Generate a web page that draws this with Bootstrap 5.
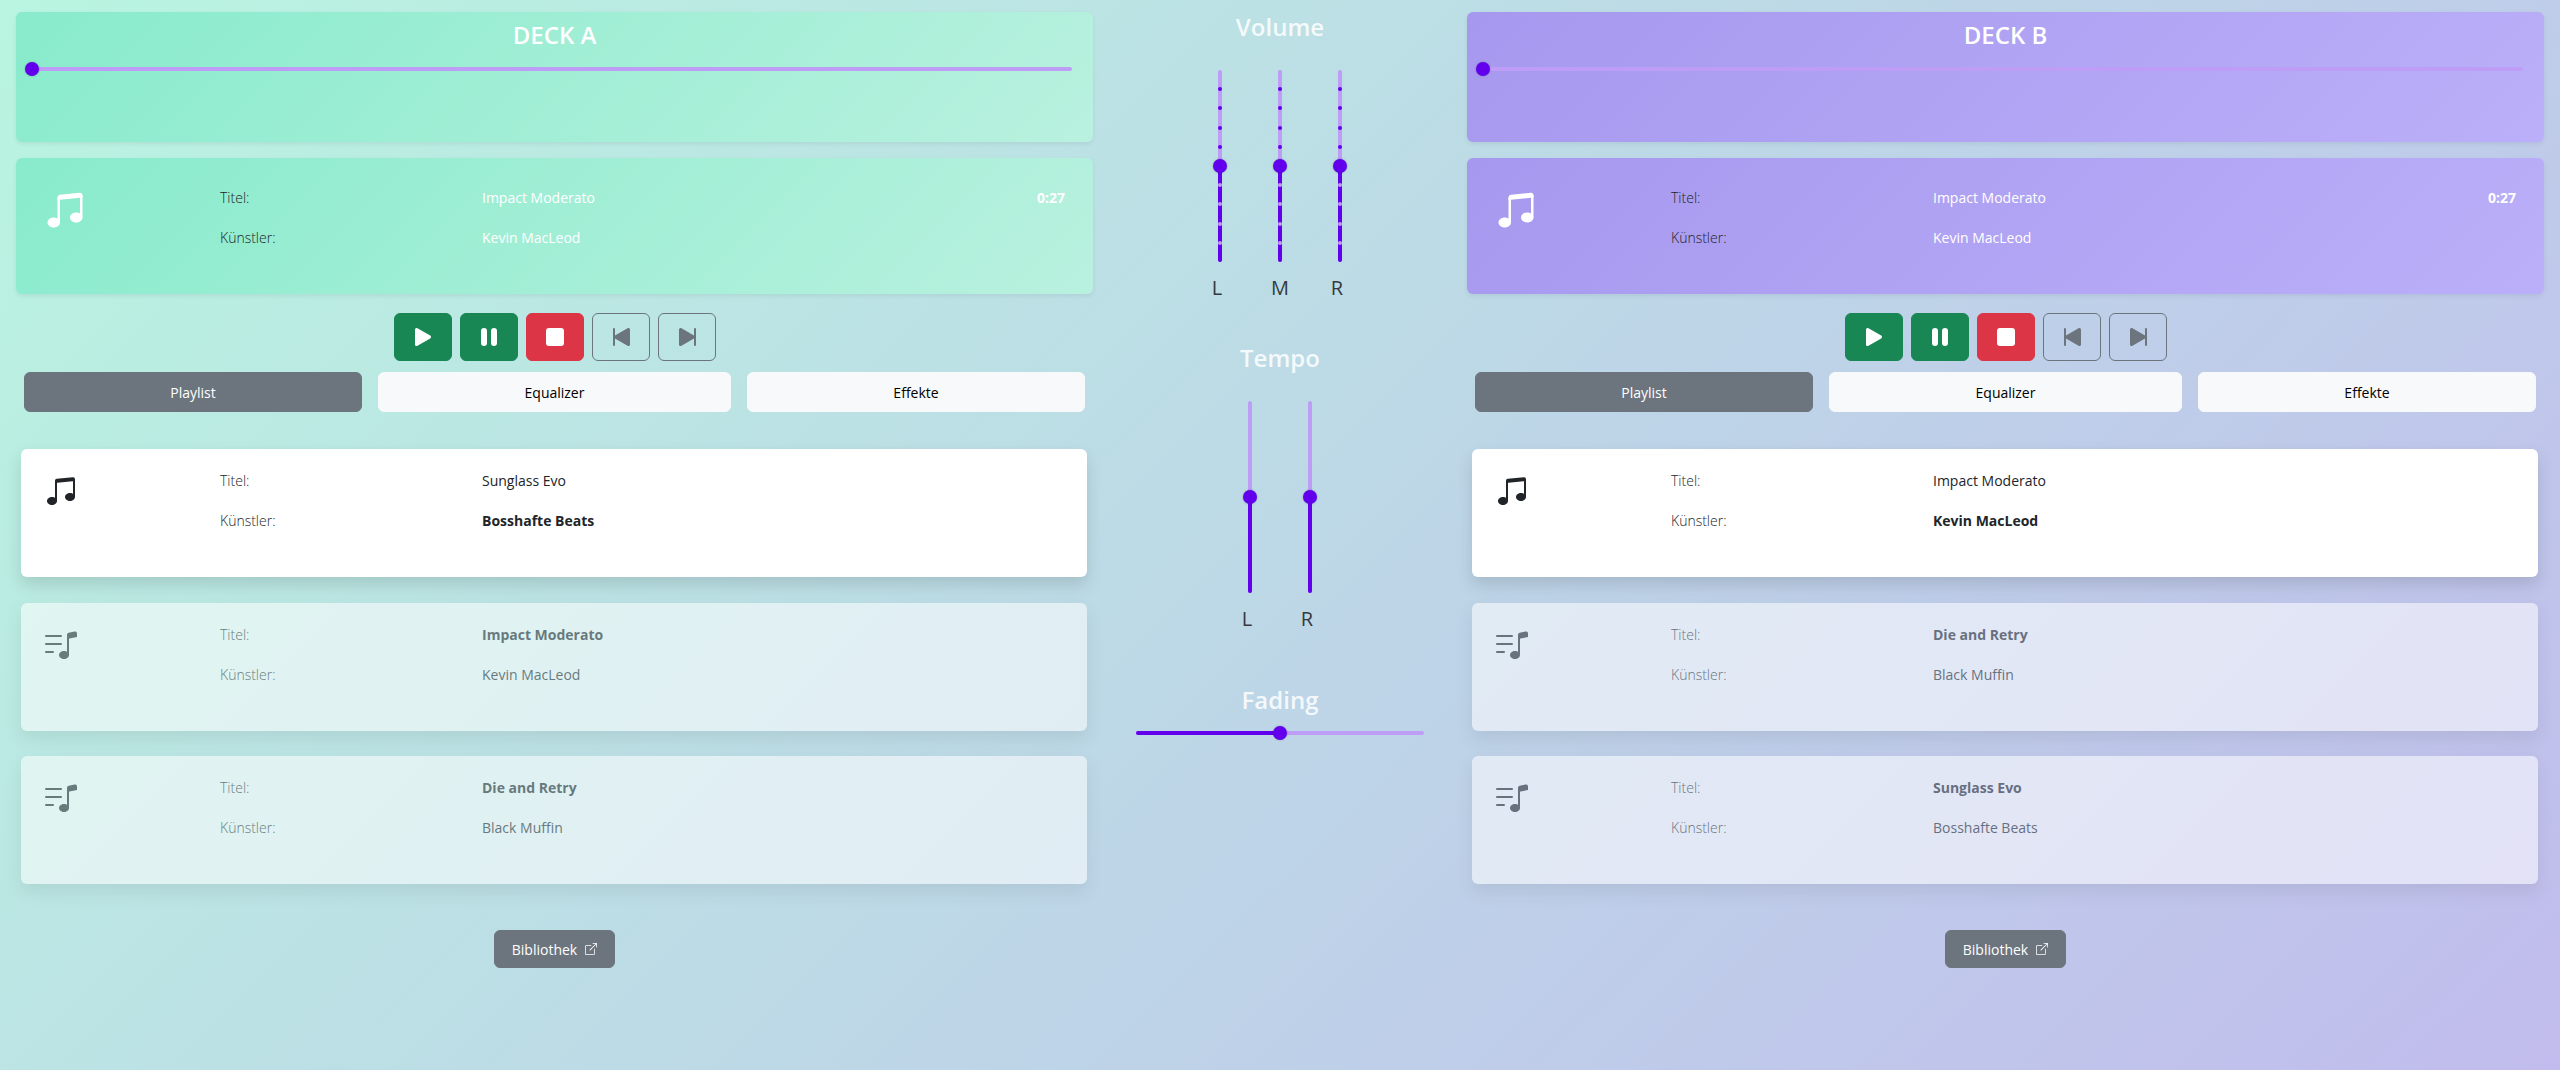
<!DOCTYPE html>
<html lang="de">
<head>
    <meta charset="UTF-8">
    <meta name="viewport" content="width=device-width, initial-scale=1.0">
    <title>DJ Decks</title>
    <link rel="stylesheet" href="https://cdn.jsdelivr.net/npm/bootstrap@5.3.0/dist/css/bootstrap.min.css">
    <style>
        body {
            min-height: 1070px;
            background: linear-gradient(135deg, #b9f5e0 0%, #c1bced 100%);
            font-family: "Open Sans", "Liberation Sans", sans-serif;
            overflow: hidden;
        }
        .mixer-page { padding: 0 16px; }
        .deck { flex: 0 0 1077px; width: 1077px; padding-top: 12px; }
        .deck-a .deck-panel { background: linear-gradient(135deg, #88ebcb 0%, #b9f1df 100%); }
        .deck-b .deck-panel { background: linear-gradient(135deg, #a698ee 0%, #bbaff9 100%); }
        .deck-panel { border-radius: 6px; }
        .seek-panel { height: 130px; margin-bottom: 16px; padding-top: 5px; }
        .deck-title { font-size: 24px; font-weight: 600; line-height: 36px; color: #fff; text-align: center; }
        .seek-wrap { margin: 14px 21px 0 16px; }
        .now-panel { height: 136px; padding: 32px 28px 0 29px; }
        .now-panel .track-icon { flex: 0 0 175px; }
        .now-panel .track-value { color: #fff; }
        .track-icon svg { display: block; margin-top: 2px; }
        .now-panel .track-icon svg { margin-top: 0; }
        .track-label { flex: 0 0 262px; font-weight: 300; }
        .track-line { height: 40px; line-height: 16px; font-size: 14px; }
        .track-time { margin-left: auto; font-weight: 700; color: #fff; font-size: 14px; line-height: 16px; }
        .transport { margin-top: 19px; height: 48px; }
        .transport .btn { width: 58px; height: 48px; padding: 0; display: flex; align-items: center; justify-content: center; }
        .deck-tabs { display: grid; grid-template-columns: 338px 353px 338px; gap: 16px; margin: 11px 8px 0; }
        .deck-tabs .btn { height: 40px; font-size: 14px; }
        .playlist { margin: 37px 6px 0 5px; }
        .track-card { height: 128px; margin-bottom: 25.5px; padding: 24px 24px 0 24px; border-radius: 6px; background: #fff; color: #212529; }
        .track-card .track-icon { flex: 0 0 175px; }
        .track-card.queued { opacity: .55; }
        .library-btn { width: 121px; height: 38px; margin-top: 20.5px; padding: 0; display: flex; align-items: center; justify-content: center; gap: 8px; font-size: 14px; }
        .mixer { flex: 1 1 auto; padding-top: 9px; text-align: center; }
        .mixer-title { font-size: 24px; font-weight: 600; line-height: 36px; color: rgba(255,255,255,.85); }
        .fader-group { display: flex; justify-content: center; margin-top: 25px; }
        .fader-cell { width: 60px; display: flex; justify-content: center; }
        .fader-labels { display: flex; justify-content: center; margin-top: 11px; height: 30px; line-height: 30px; font-size: 20px; color: #343a40; }
        .fader-labels .side { padding-right: 6px; }
        .fader { position: relative; border-radius: 2px; background: #bd9df5; }
        .fader.upright { width: 4px; height: 192px; }
        .fader.flat { width: 288px; height: 4px; margin: 13px auto 0; }
        .fader-fill { position: absolute; left: 0; background: #6200ee; border-radius: 2px; }
        .upright .fader-fill { bottom: 0; width: 100%; }
        .flat .fader-fill { top: 0; height: 100%; }
        .fader-thumb { position: absolute; width: 14px; height: 14px; border-radius: 50%; background: #6200ee; box-shadow: 0 0 2px rgba(0,0,0,.3); transform: translate(-50%, -50%); }
        .fader-tick { position: absolute; left: 0; width: 4px; height: 4px; border-radius: 50%; transform: translateY(-50%); }
        .block-gap { margin-top: 37px; }
        .fade-gap { margin-top: 48px; }
    </style>
</head>
<body>
    <div class="mixer-page d-flex">
        <div id="deckA" class="deck deck-a"></div>
        <div class="mixer">
            <div class="mixer-title">Volume</div>
            <div class="fader-group">
                <div class="fader-cell"><div class="fader upright" data-value="50" data-ticks="1"></div></div>
                <div class="fader-cell"><div class="fader upright" data-value="50" data-ticks="1"></div></div>
                <div class="fader-cell"><div class="fader upright" data-value="50" data-ticks="1"></div></div>
            </div>
            <div class="fader-labels">
                <div class="fader-cell side">L</div>
                <div class="fader-cell">M</div>
                <div class="fader-cell side">R</div>
            </div>
            <div class="mixer-title block-gap">Tempo</div>
            <div class="fader-group">
                <div class="fader-cell"><div class="fader upright" data-value="50"></div></div>
                <div class="fader-cell"><div class="fader upright" data-value="50"></div></div>
            </div>
            <div class="fader-labels">
                <div class="fader-cell side">L</div>
                <div class="fader-cell side">R</div>
            </div>
            <div class="mixer-title fade-gap">Fading</div>
            <div class="fader flat" data-value="50"></div>
        </div>
        <div id="deckB" class="deck deck-b"></div>
    </div>

    <script src="https://cdn.jsdelivr.net/npm/bootstrap@5.3.0/dist/js/bootstrap.bundle.min.js"></script>
    <script>
        const icons = {
            beamed: '<path d="M6 13c0 1.105-1.12 2-2.5 2S1 14.105 1 13c0-1.104 1.12-2 2.5-2s2.5.896 2.5 2zm9-2c0 1.105-1.12 2-2.5 2s-2.5-.895-2.5-2 1.12-2 2.5-2 2.5.895 2.5 2z"/><path fill-rule="evenodd" d="M14 11V2h1v9h-1zM6 3v10H5V3h1z"/><path d="M5 2.905a1 1 0 0 1 .9-.995l8-.8a1 1 0 0 1 1.1.995V3L5 4V2.905z"/>',
            list: '<path d="M12 13c0 1.105-1.12 2-2.5 2S7 14.105 7 13s1.12-2 2.5-2 2.5.895 2.5 2z"/><path fill-rule="evenodd" d="M12 3v10h-1V3h1z"/><path d="M11 2.82a1 1 0 0 1 .804-.98l3-.6A1 1 0 0 1 16 2.22V4l-5 1V2.82z"/><path fill-rule="evenodd" d="M0 11.5a.5.5 0 0 1 .5-.5H4a.5.5 0 0 1 0 1H.5a.5.5 0 0 1-.5-.5zm0-4A.5.5 0 0 1 .5 7H8a.5.5 0 0 1 0 1H.5a.5.5 0 0 1-.5-.5zm0-4A.5.5 0 0 1 .5 3H8a.5.5 0 0 1 0 1H.5a.5.5 0 0 1-.5-.5z"/>',
            play: '<path d="m11.596 8.697-6.363 3.692c-.54.313-1.233-.066-1.233-.697V4.308c0-.63.692-1.01 1.233-.696l6.363 3.692a.802.802 0 0 1 0 1.393z"/>',
            pause: '<path d="M5.5 3.5A1.5 1.5 0 0 1 7 5v6a1.5 1.5 0 0 1-3 0V5a1.5 1.5 0 0 1 1.5-1.5zm5 0A1.5 1.5 0 0 1 12 5v6a1.5 1.5 0 0 1-3 0V5a1.5 1.5 0 0 1 1.5-1.5z"/>',
            stop: '<path d="M5 3.5h6A1.5 1.5 0 0 1 12.5 5v6a1.5 1.5 0 0 1-1.5 1.5H5A1.5 1.5 0 0 1 3.5 11V5A1.5 1.5 0 0 1 5 3.5z"/>',
            prev: '<path d="M4 4a.5.5 0 0 1 1 0v3.248l6.267-3.636c.54-.313 1.232.066 1.232.696v7.384c0 .63-.692 1.01-1.232.697L5 8.753V12a.5.5 0 0 1-1 0V4z"/>',
            next: '<path d="M12.5 4a.5.5 0 0 0-1 0v3.248L5.233 3.612C4.693 3.3 4 3.678 4 4.308v7.384c0 .63.692 1.01 1.233.697L11.5 8.753V12a.5.5 0 0 0 1 0V4z"/>',
            external: '<path fill-rule="evenodd" d="M8.636 3.5a.5.5 0 0 0-.5-.5H1.5A1.5 1.5 0 0 0 0 4.5v10A1.5 1.5 0 0 0 1.5 16h10a1.5 1.5 0 0 0 1.5-1.5V7.864a.5.5 0 0 0-1 0V14.5a.5.5 0 0 1-.5.5h-10a.5.5 0 0 1-.5-.5v-10a.5.5 0 0 1 .5-.5h6.636a.5.5 0 0 0 .5-.5z"/><path fill-rule="evenodd" d="M16 .5a.5.5 0 0 0-.5-.5h-5a.5.5 0 0 0 0 1h3.793L6.146 9.146a.5.5 0 1 0 .708.708L15 1.707V5.5a.5.5 0 0 0 1 0v-5z"/>'
        };

        function icon(name, size) {
            return `<svg xmlns="http://www.w3.org/2000/svg" width="${size}" height="${size}" fill="currentColor" viewBox="0 0 16 16">${icons[name]}</svg>`;
        }

        function trackCard(track) {
            return `<div class="track-card shadow d-flex ${track.active ? '' : 'queued'}">
                        <div class="track-icon">${icon(track.active ? 'beamed' : 'list', 32)}</div>
                        <div>
                            <div class="track-line d-flex"><div class="track-label">Titel:</div><div class="${track.active ? '' : track.boldTitle ? 'fw-bold' : ''}">${track.title}</div></div>
                            <div class="track-line d-flex"><div class="track-label">Künstler:</div><div class="${track.boldArtist ? 'fw-bold' : ''}">${track.artist}</div></div>
                        </div>
                    </div>`;
        }

        function renderDeck(target, deck) {
            document.getElementById(target).innerHTML = `
                <div class="deck-panel seek-panel shadow-sm">
                    <div class="deck-title">${deck.name}</div>
                    <div class="seek-wrap"><div class="fader seek" data-value="0" style="height:4px"></div></div>
                </div>
                <div class="deck-panel now-panel shadow-sm d-flex">
                    <div class="track-icon text-white">${icon('beamed', 40)}</div>
                    <div class="flex-grow-1">
                        <div class="track-line d-flex"><div class="track-label">Titel:</div><div class="track-value">Impact Moderato</div><div class="track-time">0:27</div></div>
                        <div class="track-line d-flex"><div class="track-label">Künstler:</div><div class="track-value">Kevin MacLeod</div></div>
                    </div>
                </div>
                <div class="transport d-flex justify-content-center gap-2">
                    <button class="btn btn-success">${icon('play', 32)}</button>
                    <button class="btn btn-success">${icon('pause', 32)}</button>
                    <button class="btn btn-danger">${icon('stop', 32)}</button>
                    <button class="btn btn-outline-secondary">${icon('prev', 32)}</button>
                    <button class="btn btn-outline-secondary">${icon('next', 32)}</button>
                </div>
                <div class="deck-tabs">
                    <button class="btn btn-secondary">Playlist</button>
                    <button class="btn btn-light">Equalizer</button>
                    <button class="btn btn-light">Effekte</button>
                </div>
                <div class="playlist">${deck.tracks.map(trackCard).join('')}</div>
                <div class="d-flex justify-content-center">
                    <a href="#" class="btn btn-secondary library-btn">Bibliothek ${icon('external', 12)}</a>
                </div>`;
        }

        renderDeck('deckA', {
            name: 'DECK A',
            tracks: [
                { title: 'Sunglass Evo', artist: 'Bosshafte Beats', active: true, boldArtist: true },
                { title: 'Impact Moderato', artist: 'Kevin MacLeod', boldTitle: true },
                { title: 'Die and Retry', artist: 'Black Muffin', boldTitle: true }
            ]
        });
        renderDeck('deckB', {
            name: 'DECK B',
            tracks: [
                { title: 'Impact Moderato', artist: 'Kevin MacLeod', active: true, boldArtist: true },
                { title: 'Die and Retry', artist: 'Black Muffin', boldTitle: true },
                { title: 'Sunglass Evo', artist: 'Bosshafte Beats', boldTitle: true }
            ]
        });

        // fill, thumb and tick marks come from data-value
        document.querySelectorAll('.fader').forEach(fader => {
            const value = Number(fader.dataset.value);
            const upright = fader.classList.contains('upright');
            let html = upright
                ? `<div class="fader-fill" style="height:${value}%"></div>`
                : `<div class="fader-fill" style="width:${value}%"></div>`;
            if (fader.dataset.ticks) {
                for (let i = 10; i < 100; i += 10) {
                    if (i === value) continue;
                    const colour = i > value ? '#bd9df5' : '#6200ee';
                    html += `<div class="fader-tick" style="top:${i}%;background:${colour}"></div>`;
                }
            }
            html += upright
                ? `<div class="fader-thumb" style="left:50%;top:${100 - value}%"></div>`
                : `<div class="fader-thumb" style="left:${value}%;top:50%"></div>`;
            fader.innerHTML = html;
        });
    </script>
</body>
</html>
